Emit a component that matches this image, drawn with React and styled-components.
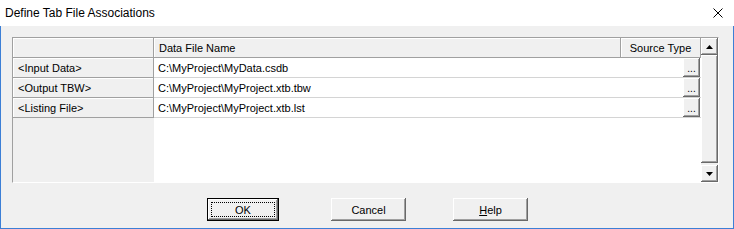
import styled, { createGlobalStyle } from "styled-components";

const GlobalStyle = createGlobalStyle`
    body {
        margin: 0;
        background: #f0f0f0;
    }
`

const rows = [
    { label: "<Input Data>", file: "C:\\MyProject\\MyData.csdb" },
    { label: "<Output TBW>", file: "C:\\MyProject\\MyProject.xtb.tbw" },
    { label: "<Listing File>", file: "C:\\MyProject\\MyProject.xtb.lst" },
]

function Arrow({ down }) {
    return (
        <svg width="7" height="4" viewBox="0 0 7 4">
            {down
                ? <polygon points="0,0 7,0 3.5,4" fill="#000" />
                : <polygon points="0,4 7,4 3.5,0" fill="#000" />}
        </svg>
    )
}

export default function App() {
    return (
        <Window>
            <GlobalStyle />
            <TitleBar>
                <Title>Define Tab File Associations</Title>
                <Close>
                    <svg width="10" height="10" viewBox="0 0 10 10">
                        <path d="M0.5 0.5 L9.5 9.5 M9.5 0.5 L0.5 9.5" stroke="#000" strokeWidth="1" />
                    </svg>
                </Close>
            </TitleBar>
            <Body>
                <Frame>
                    <Table>
                        <Row>
                            <HeadCell $width="141px" />
                            <HeadCell>Data File Name</HeadCell>
                            <HeadCell $width="80px" $center>Source Type</HeadCell>
                        </Row>
                        {rows.map((r) => (
                            <Row key={r.label}>
                                <HeadCell $width="141px">{r.label}</HeadCell>
                                <DataCell>
                                    <FileName>{r.file}</FileName>
                                    <DotsButton>...</DotsButton>
                                </DataCell>
                            </Row>
                        ))}
                        <Filler>
                            <FillerHead />
                            <FillerData />
                        </Filler>
                    </Table>
                    <ScrollBar>
                        <ScrollButton><Arrow /></ScrollButton>
                        <Thumb />
                        <ScrollButton><Arrow down /></ScrollButton>
                    </ScrollBar>
                </Frame>
                <Buttons>
                    <DialogButton $default $width="72px">
                        <Focus>OK</Focus>
                    </DialogButton>
                    <DialogButton $gap="52px">Cancel</DialogButton>
                    <DialogButton $gap="47px"><u>H</u>elp</DialogButton>
                </Buttons>
            </Body>
        </Window>
    )
}

const raised = `
    box-shadow: inset -1px -1px #696969, inset 1px 1px #ffffff,
        inset -2px -2px #a0a0a0, inset 2px 2px #f0f0f0;
`

const Window = styled.div`
    width: 734px;
    height: 229px;
    display: flex;
    flex-direction: column;
    font-family: "Liberation Sans", Arial, sans-serif;
    font-size: 11px;
    color: #000000;
    box-sizing: border-box;
`

const TitleBar = styled.div`
    height: 26px;
    background: #ffffff;
    display: flex;
    align-items: center;
    justify-content: space-between;
    padding: 0 11px 1px 5px;
    box-sizing: border-box;
`

const Title = styled.div`
    font-family: "Liberation Sans", Arial, sans-serif;
    font-size: 12px;
`

const Close = styled.div`
    display: flex;
    margin-top: 1px;
`

const Body = styled.div`
    flex: 1;
    border: 1px solid #3c7fd6;
    border-top: none;
    background: #f0f0f0;
    padding: 11px 14px 0 11px;
    display: flex;
    flex-direction: column;
`

const Frame = styled.div`
    height: 146px;
    display: flex;
    border-top: 1px solid #a0a0a0;
    border-left: 1px solid #a0a0a0;
    border-right: 1px solid #ffffff;
    border-bottom: 1px solid #ffffff;
    box-sizing: border-box;
`

const Table = styled.div`
    flex: 1;
    display: flex;
    flex-direction: column;
`

const Row = styled.div`
    height: 20px;
    display: flex;
`

const HeadCell = styled.div`
    width: ${(p) => p.$width || "auto"};
    flex: ${(p) => (p.$width ? "none" : "1")};
    height: 20px;
    box-sizing: border-box;
    background: #f0f0f0;
    border-right: 1px solid #a0a0a0;
    border-bottom: 1px solid #a0a0a0;
    box-shadow: inset 1px 1px #ffffff;
    display: flex;
    align-items: center;
    justify-content: ${(p) => (p.$center ? "center" : "flex-start")};
    padding: 0 ${(p) => (p.$center ? "0" : "5px")};
    white-space: nowrap;
`

const DataCell = styled.div`
    flex: 1;
    height: 20px;
    box-sizing: border-box;
    background: #ffffff;
    border-bottom: 1px solid #d4d4d4;
    display: flex;
    align-items: center;
    padding: 0 1px 0 4px;
`

const FileName = styled.span`
    flex: 1;
    white-space: nowrap;
`

const DotsButton = styled.div`
    width: 17px;
    height: 19px;
    box-sizing: border-box;
    background: #f0f0f0;
    ${raised}
    display: flex;
    align-items: flex-end;
    justify-content: center;
    padding-bottom: 5px;
    font-size: 10px;
    line-height: 6px;
`

const Filler = styled.div`
    flex: 1;
    display: flex;
`

const FillerHead = styled.div`
    width: 141px;
    background: #f0f0f0;
`

const FillerData = styled.div`
    flex: 1;
    background: #ffffff;
`

const ScrollBar = styled.div`
    width: 17px;
    display: flex;
    flex-direction: column;
    background: #f0f0f0;
`

const ScrollButton = styled.div`
    width: 17px;
    height: 17px;
    box-sizing: border-box;
    background: #f0f0f0;
    ${raised}
    display: flex;
    align-items: center;
    justify-content: center;
`

const Thumb = styled.div`
    flex: 1;
    margin-bottom: 2px;
    background: #f0f0f0;
    ${raised}
`

const Buttons = styled.div`
    display: flex;
    margin-top: 15px;
    padding-left: 195px;
`

const DialogButton = styled.div`
    width: ${(p) => p.$width || "75px"};
    height: 23px;
    margin-left: ${(p) => p.$gap || "0"};
    box-sizing: border-box;
    background: #f0f0f0;
    ${raised}
    ${(p) => p.$default && `
        border: 1px solid #000000;
        box-shadow: inset -1px -1px #696969, inset 1px 1px #ffffff,
            inset -2px -2px #a0a0a0;
    `}
    display: flex;
    align-items: center;
    justify-content: center;
    padding: ${(p) => (p.$default ? "3px" : "0")};
`

const Focus = styled.div`
    flex: 1;
    align-self: stretch;
    border: 1px dotted #000000;
    display: flex;
    align-items: center;
    justify-content: center;
`
